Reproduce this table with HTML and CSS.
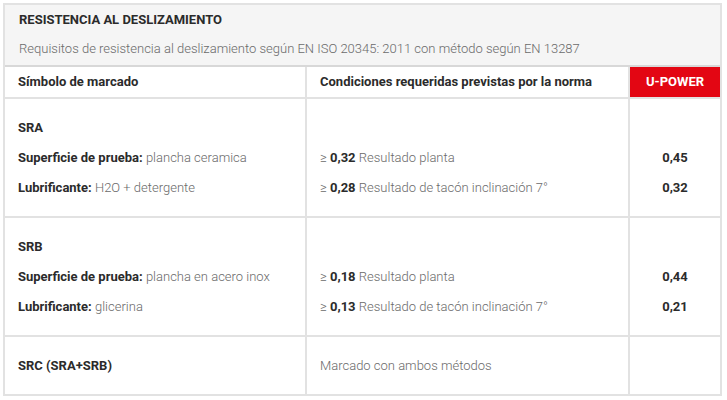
FILE: index.html
```html
<!DOCTYPE html>
<html lang="es">
<head>
<meta charset="utf-8">
<title>Resistencia al deslizamiento</title>
<link rel="stylesheet" href="styles.css">
</head>
<body>
<div class="sheet">
  <div class="head">
    <div class="title">RESISTENCIA AL DESLIZAMIENTO</div>
    <div class="sub">Requisitos de resistencia al deslizamiento según EN ISO 20345: 2011 con método según EN 13287</div>
  </div>
  <table class="grid">
    <colgroup>
      <col class="c1"><col class="c2"><col class="c3">
    </colgroup>
    <thead>
      <tr>
        <th>Símbolo de marcado</th>
        <th>Condiciones requeridas previstas por la norma</th>
        <th class="brand">U-POWER</th>
      </tr>
    </thead>
    <tbody>
      <tr>
        <td>
          <div class="ln"><b>SRA</b></div>
          <div class="ln"><b>Superficie de prueba:</b> <span class="mut">plancha ceramica</span></div>
          <div class="ln"><b>Lubrificante:</b> <span class="mut">H2O + detergente</span></div>
        </td>
        <td>
          <div class="ln">&nbsp;</div>
          <div class="ln"><span class="mut">≥</span> <b>0,32</b> <span class="mut">Resultado planta</span></div>
          <div class="ln"><span class="mut">≥</span> <b>0,28</b> <span class="mut">Resultado de tacón inclinación 7°</span></div>
        </td>
        <td class="val">
          <div class="ln">&nbsp;</div>
          <div class="ln"><b>0,45</b></div>
          <div class="ln"><b>0,32</b></div>
        </td>
      </tr>
      <tr>
        <td>
          <div class="ln"><b>SRB</b></div>
          <div class="ln"><b>Superficie de prueba:</b> <span class="mut">plancha en acero inox</span></div>
          <div class="ln"><b>Lubrificante:</b> <span class="mut">glicerina</span></div>
        </td>
        <td>
          <div class="ln">&nbsp;</div>
          <div class="ln"><span class="mut">≥</span> <b>0,18</b> <span class="mut">Resultado planta</span></div>
          <div class="ln"><span class="mut">≥</span> <b>0,13</b> <span class="mut">Resultado de tacón inclinación 7°</span></div>
        </td>
        <td class="val">
          <div class="ln">&nbsp;</div>
          <div class="ln"><b>0,44</b></div>
          <div class="ln"><b>0,21</b></div>
        </td>
      </tr>
      <tr>
        <td><div class="ln"><b>SRC (SRA+SRB)</b></div></td>
        <td><div class="ln"><span class="mut">Marcado con ambos métodos</span></div></td>
        <td class="val"><div class="ln">&nbsp;</div></td>
      </tr>
    </tbody>
  </table>
</div>
</body>
</html>
```
FILE: styles.css
```css
html, body {
  margin: 0;
  padding: 0;
  background: #ffffff;
}
body {
  font-family: Roboto, "Liberation Sans", Arial, sans-serif;
  font-size: 13px;
  color: #2b2b2b;
}
.sheet {
  margin: 3px 0 0 3px;
  width: 719px;
  border: 2px solid #e2e2e2;
  box-sizing: border-box;
}
.head {
  background: #f5f5f5;
  padding: 0 14px 1px;
  border-bottom: 2px solid #d8d8d8;
}
.title {
  font-weight: 700;
  line-height: 29px;
  color: #2b2b2b;
}
.sub {
  line-height: 30px;
  font-weight: 300;
  color: #6a6a6a;
}
.grid {
  width: 100%;
  border-collapse: collapse;
  table-layout: fixed;
}
.c1 { width: 301px; }
.c2 { width: 323px; }
.c3 { width: auto; }
.grid th, .grid td {
  text-align: left;
  vertical-align: top;
  padding: 0 13px;
  border: 2px solid #e2e2e2;
}
.grid tr > :first-child { border-left: 0; }
.grid tr > :last-child { border-right: 0; }
.grid thead th {
  border-top: 0;
  font-weight: 700;
  line-height: 30px;
  color: #2b2b2b;
}
.grid th.brand {
  background: #e30613;
  color: #ffffff;
  text-align: center;
}
.grid tbody td {
  padding-top: 14px;
  padding-bottom: 13px;
}
.grid tbody tr:last-child td { border-bottom: 0; }
.ln {
  line-height: 30px;
  white-space: nowrap;
}
.ln b {
  font-weight: 700;
  color: #2b2b2b;
}
.mut {
  font-weight: 300;
  color: #6a6a6a;
}
.grid td.val {
  text-align: center;
}
```
